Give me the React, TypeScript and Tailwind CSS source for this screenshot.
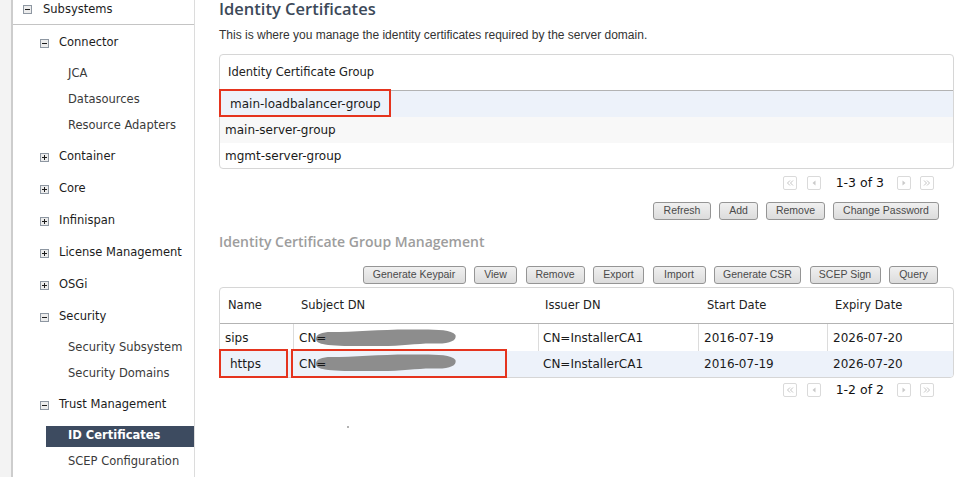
import React from 'react';

type TreeNode = { label: string; open?: boolean; children?: string[] };

const TREE: TreeNode[] = [
  { label: 'Connector', open: true, children: ['JCA', 'Datasources', 'Resource Adapters'] },
  { label: 'Container' },
  { label: 'Core' },
  { label: 'Infinispan' },
  { label: 'License Management' },
  { label: 'OSGi' },
  { label: 'Security', open: true, children: ['Security Subsystem', 'Security Domains'] },
  { label: 'Trust Management', open: true, children: ['ID Certificates', 'SCEP Configuration'] },
];

const ACTIVE = 'ID Certificates';

function TreeToggle({ open }: { open: boolean }) {
  return (
    <svg width="9" height="9" viewBox="0 0 9 9" className="shrink-0">
      <rect x="0.5" y="0.5" width="8" height="8" fill="#ececec" stroke="#8e97a2" />
      <path d="M2 4.5h5" stroke="#1c1c1c" />
      {!open && <path d="M4.5 2v5" stroke="#1c1c1c" />}
    </svg>
  );
}

function Sidebar() {
  return (
    <aside className="flex w-[195px] shrink-0">
      <div className="w-[13px] border-r-2 border-[#cdcdcd] bg-[#f3f3f3]" />
      <nav className="flex-1 border-r border-[#dcdcdc] font-['DejaVu_Sans',sans-serif] text-[11.5px]">
        <div className="flex h-[25px] items-center gap-[11px] border-b border-[#c4c4c4] pb-[5px] pl-[10px] text-[#1c1c1c]">
          <TreeToggle open />
          Subsystems
        </div>
        <div className="pt-[2px]">
          {TREE.map((node) => (
            <div key={node.label}>
              <div className="flex h-[32px] items-center gap-[10px] pl-[27px] text-[#1c1c1c]">
                <TreeToggle open={!!node.open} />
                {node.label}
              </div>
              {node.children && (
                <div className="py-[2px]">
                  {node.children.map((child) => (
                    <div key={child} className="flex h-[26px] items-center">
                      {child === ACTIVE ? (
                        <div className="ml-[33px] flex h-[21px] flex-1 items-center bg-[#3d4b60] pl-[22px] font-bold text-white">
                          {child}
                        </div>
                      ) : (
                        <div className="ml-[33px] flex h-[21px] flex-1 items-center pl-[22px] text-[#3a3a3a]">
                          {child}
                        </div>
                      )}
                    </div>
                  ))}
                </div>
              )}
            </div>
          ))}
        </div>
      </nav>
    </aside>
  );
}

function PagerBox({ children, className }: { children: React.ReactNode; className?: string }) {
  return (
    <span
      className={`flex h-[14px] w-[14px] items-center justify-center rounded-[2px] border border-[#dadada] bg-white ${className ?? ''}`}
    >
      {children}
    </span>
  );
}

function Pager({ text }: { text: string }) {
  return (
    <div className="flex h-[14px] items-center justify-end pr-[20px]">
      <PagerBox>
        <svg width="8" height="8" viewBox="0 0 8 8">
          <path d="M4 1.5L1.5 4L4 6.5M7 1.5L4.5 4L7 6.5" fill="none" stroke="#c4c4c4" />
        </svg>
      </PagerBox>
      <PagerBox className="ml-[10px]">
        <svg width="8" height="8" viewBox="0 0 8 8">
          <path d="M5.5 1.5L2.5 4L5.5 6.5Z" fill="#cacaca" />
        </svg>
      </PagerBox>
      <span className="ml-[15px] mr-[13px] font-['DejaVu_Sans',sans-serif] text-[12.5px] text-[#111]">{text}</span>
      <PagerBox>
        <svg width="8" height="8" viewBox="0 0 8 8">
          <path d="M2.5 1.5L5.5 4L2.5 6.5Z" fill="#cacaca" />
        </svg>
      </PagerBox>
      <PagerBox className="ml-[9px]">
        <svg width="8" height="8" viewBox="0 0 8 8">
          <path d="M1 1.5L3.5 4L1 6.5M4 1.5L6.5 4L4 6.5" fill="none" stroke="#c4c4c4" />
        </svg>
      </PagerBox>
    </div>
  );
}

function Button({ label, width }: { label: string; width: string }) {
  return (
    <button
      className={`flex h-[18px] items-center justify-center rounded-[3px] border border-[#959595] bg-linear-to-b from-[#f0f0f0] to-[#dcdcdc] font-['Liberation_Sans',Arial,sans-serif] text-[10.5px] text-[#4a4a4a] ${width}`}
    >
      {label}
    </button>
  );
}

function Redaction({ className }: { className: string }) {
  return (
    <svg width="142" height="21" viewBox="0 0 142 21" className={`absolute ${className}`}>
      <path
        d="M1 12C1 7 7 5 16 5C40 5 70 2 100 2.5C118 2.5 136 2 140.5 8C142 14 134 17 120 16.5C104 16 88 19 66 19C44 19 22 19.5 10 17.5C4 16.5 1 15 1 12Z"
        fill="#8d8d8d"
      />
    </svg>
  );
}

export default function App() {
  return (
    <div className="flex h-[477px] w-[966px] overflow-hidden bg-white">
      <Sidebar />

      <main className="flex flex-1 flex-col pl-[24px] pr-[12px]">
        <h1 className="-mt-[1px] font-['Open_Sans',sans-serif] text-[16.5px] font-semibold leading-[20px] text-[#3c4959]">
          Identity Certificates
        </h1>
        <p className="mt-[9px] font-['Liberation_Sans',Arial,sans-serif] text-[12px] leading-[14px] text-[#333]">
          This is where you manage the identity certificates required by the server domain.
        </p>

        {/* Certificate groups */}
        <div className="mt-[12px] rounded-[4px] border border-[#d6d6d6] font-['DejaVu_Sans',sans-serif]">
          <div className="flex h-[36px] items-center border-b border-[#b3b3b3] pl-[8px] text-[11.5px] text-[#222]">
            Identity Certificate Group
          </div>
          <div className="relative flex h-[26px] items-center bg-[#edf2fa] pl-[10px] text-[12px] text-[#1a1a1a]">
            main-loadbalancer-group
            <span className="absolute -left-[1px] -top-[2px] h-[28px] w-[172px] border-2 border-[#e5341e]" />
          </div>
          <div className="flex h-[26px] items-center bg-[#f8f8f8] pl-[5px] text-[12px] text-[#1a1a1a]">
            main-server-group
          </div>
          <div className="flex h-[25px] items-center rounded-b-[3px] pl-[5px] text-[12px] text-[#1a1a1a]">
            mgmt-server-group
          </div>
        </div>

        <div className="mt-[7px]">
          <Pager text="1-3 of 3" />
        </div>

        <div className="mt-[12px] flex justify-end gap-[8px] pr-[15px]">
          <Button label="Refresh" width="w-[58px]" />
          <Button label="Add" width="w-[39px]" />
          <Button label="Remove" width="w-[59px]" />
          <Button label="Change Password" width="w-[106px]" />
        </div>

        <h2 className="mt-[12px] font-['Open_Sans',sans-serif] text-[14px] font-semibold leading-[20px] text-[#9d9d9d]">
          Identity Certificate Group Management
        </h2>

        <div className="mt-[14px] flex justify-end gap-[8.5px] pr-[16px]">
          <Button label="Generate Keypair" width="w-[103px]" />
          <Button label="View" width="w-[43px]" />
          <Button label="Remove" width="w-[59px]" />
          <Button label="Export" width="w-[51px]" />
          <Button label="Import" width="w-[53px]" />
          <Button label="Generate CSR" width="w-[87px]" />
          <Button label="SCEP Sign" width="w-[71px]" />
          <Button label="Query" width="w-[49px]" />
        </div>

        {/* Certificates */}
        <div className="mt-[3px] rounded-[4px] border border-[#d6d6d6] font-['DejaVu_Sans',sans-serif] text-[#1a1a1a]">
          <div className="grid h-[36px] grid-cols-[73px_245px_160px_129px_1fr] items-center border-b border-[#b3b3b3] text-[11.5px] text-[#222]">
            <span className="pl-[8px]">Name</span>
            <span className="pl-[8px]">Subject DN</span>
            <span className="pl-[7px]">Issuer DN</span>
            <span className="pl-[9px]">Start Date</span>
            <span className="pl-[8px]">Expiry Date</span>
          </div>
          <div className="grid h-[27px] grid-cols-[73px_245px_160px_129px_1fr] text-[12px]">
            <span className="flex items-center pl-[5px]">sips</span>
            <span className="relative flex items-center border-l border-[#dcdcdc] pl-[5px]">
              <Redaction className="left-[21px] top-[3px]" />
              <span className="relative">CN=</span>
            </span>
            <span className="flex items-center border-l border-[#dcdcdc] pl-[4px]">CN=InstallerCA1</span>
            <span className="flex items-center border-l border-[#dcdcdc] pl-[5px]">2016-07-19</span>
            <span className="flex items-center border-l border-[#dcdcdc] pl-[5px]">2026-07-20</span>
          </div>
          <div className="relative grid h-[26px] grid-cols-[73px_245px_160px_129px_1fr] rounded-b-[3px] bg-[#edf2fa] text-[12px]">
            <span className="flex items-center pl-[10px]">https</span>
            <span className="relative flex items-center border-l border-[#edf2fa] pl-[5px]">
              <Redaction className="left-[21px] top-[1px]" />
              <span className="relative">CN=</span>
            </span>
            <span className="flex items-center border-l border-[#edf2fa] pl-[4px]">CN=InstallerCA1</span>
            <span className="flex items-center border-l border-[#edf2fa] pl-[5px]">2016-07-19</span>
            <span className="flex items-center border-l border-[#edf2fa] pl-[5px]">2026-07-20</span>
            <span className="absolute -left-[1px] -top-[2px] h-[29px] w-[69px] border-2 border-[#e5341e]" />
            <span className="absolute left-[71px] -top-[2px] h-[29px] w-[216px] border-2 border-[#e5341e]" />
          </div>
        </div>

        <div className="mt-[5px]">
          <Pager text="1-2 of 2" />
        </div>

        <span className="ml-[128px] mt-[29px] h-[2px] w-[2px] rounded-full bg-[#9a9a9a]" />
      </main>
    </div>
  );
}
